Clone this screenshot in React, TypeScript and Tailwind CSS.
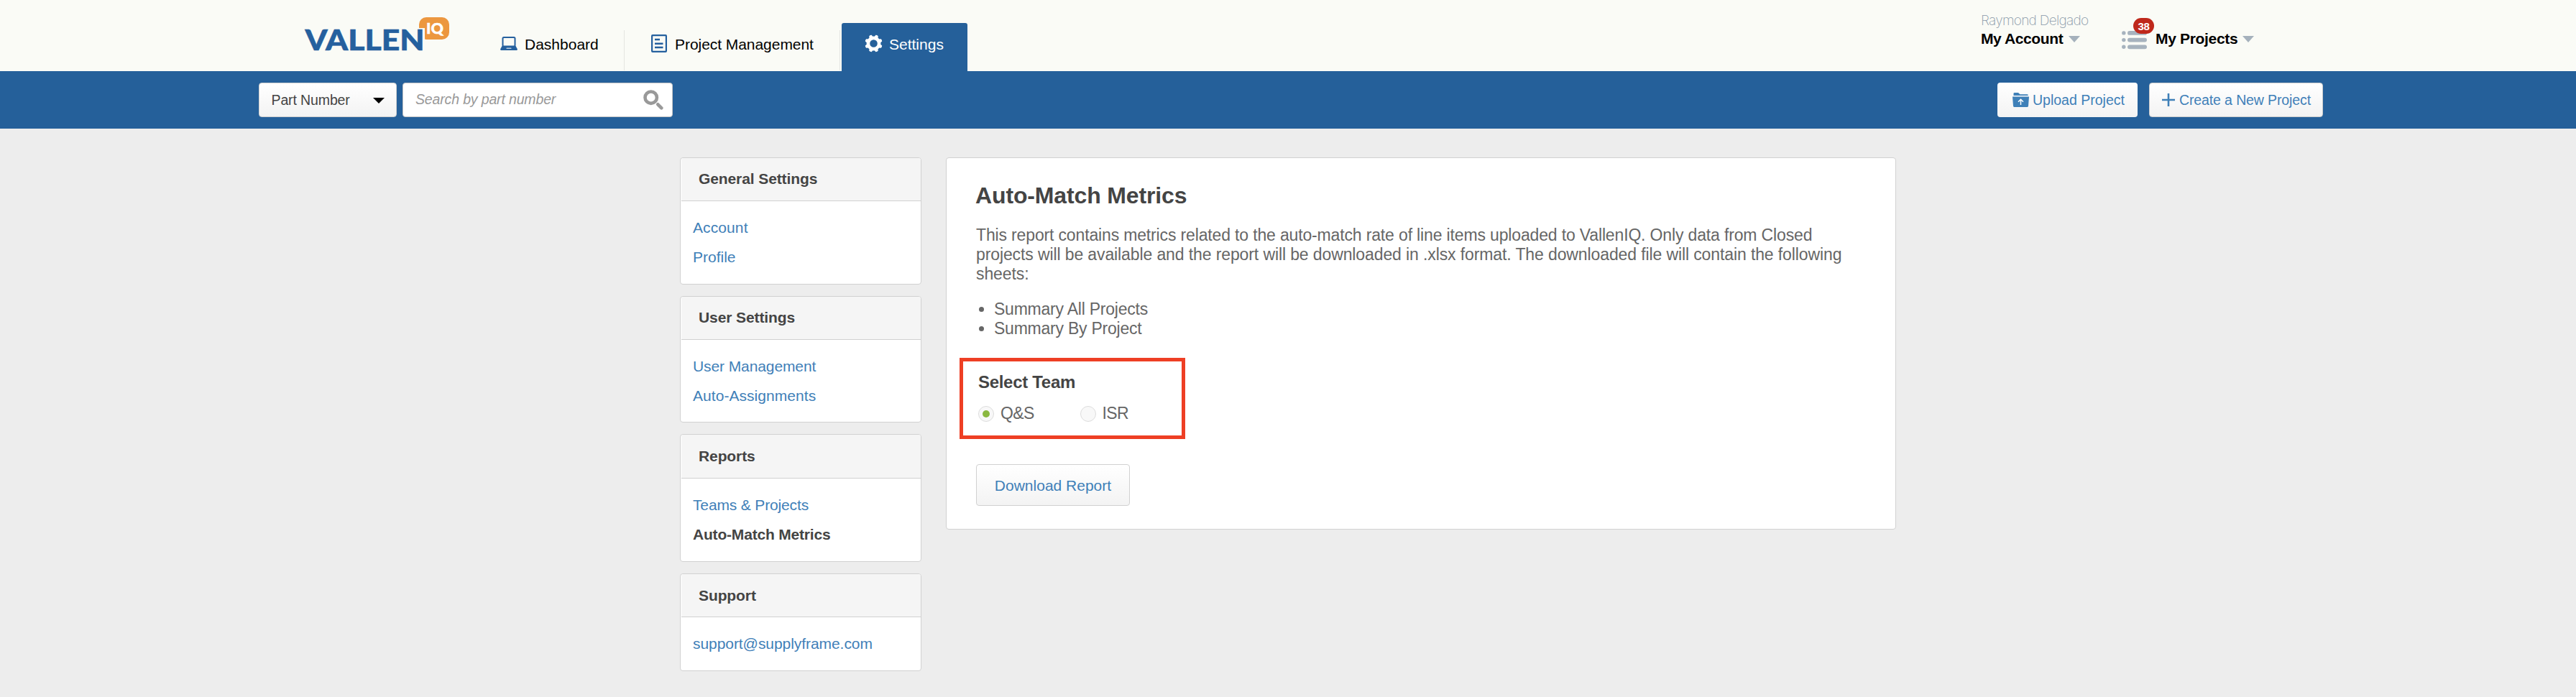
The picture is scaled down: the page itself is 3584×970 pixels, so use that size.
import type { ReactNode } from "react";

function Logo() {
  return (
    <svg width="202" height="60" viewBox="0 0 202 60" className="mt-[24px] shrink-0 overflow-visible">
      <rect x="159" y="0" width="42" height="31" rx="10" fill="#ec973f" />
      <rect x="150" y="15" width="17" height="33" fill="#fafbf6" />
      <text x="0.5" y="45.7" fontFamily="Lato" fontWeight="900" fontSize="39" fill="#25609e" stroke="#25609e" strokeWidth="0.6" textLength="166" lengthAdjust="spacingAndGlyphs">
        VALLEN
      </text>
      <text x="169" y="22.6" fontFamily="Lato" fontWeight="900" fontSize="21.5" fill="#ffffff" stroke="#ffffff" strokeWidth="0.5" textLength="24" lengthAdjust="spacingAndGlyphs">
        IQ
      </text>
    </svg>
  );
}

function LaptopIcon() {
  return (
    <svg width="24" height="19" viewBox="0 0 24 19" className="mt-px shrink-0">
      <rect x="3.5" y="1" width="17" height="12.5" rx="1.5" fill="none" stroke="#25609e" strokeWidth="2" />
      <path d="M2.5 13h19l2.3 4.2c.3 1-.1 1.8-1 1.8H1.2c-.9 0-1.3-.8-1-1.8z" fill="#25609e" />
      <rect x="8.5" y="15.5" width="7" height="1.6" rx=".6" fill="#b9cde0" />
    </svg>
  );
}

function DocumentIcon() {
  return (
    <svg width="22" height="25" viewBox="0 0 22 25" className="-mt-[2px] shrink-0">
      <rect x="1.1" y="1.1" width="19.8" height="22.8" rx=".8" fill="none" stroke="#25609e" strokeWidth="2.2" />
      <path d="M5 7h7M5 12.7h11.5M5 18h11.5" stroke="#25609e" strokeWidth="2.4" fill="none" />
    </svg>
  );
}

function GearIcon() {
  const teeth = [0, 45, 90, 135, 180, 225, 270, 315];
  return (
    <svg width="25" height="25" viewBox="0 0 25 25" className="-mt-[2px] shrink-0">
      <g transform="rotate(22.5 12.5 12.5)" fill="#ffffff">
        {teeth.map((a) => (
          <path key={a} d="M9.4 4.5L10.7 .6Q12.5 -.2 14.3 .6L15.6 4.5z" transform={`rotate(${a} 12.5 12.5)`} />
        ))}
      </g>
      <circle cx="12.5" cy="12.5" r="7.6" fill="none" stroke="#ffffff" strokeWidth="4.6" />
    </svg>
  );
}

function SearchIcon() {
  return (
    <svg width="28" height="28" viewBox="0 0 28 28" className="shrink-0">
      <circle cx="10.7" cy="10.7" r="8.2" fill="none" stroke="#999999" strokeWidth="4.6" />
      <path d="M20.3 20.3l5 5" stroke="#999999" strokeWidth="4.6" strokeLinecap="round" />
    </svg>
  );
}

function FolderIcon() {
  return (
    <svg width="23" height="20" viewBox="0 0 23 20" className="shrink-0">
      <path d="M1.5 4V1.2Q1.5 0 2.7 0H8l2.5 2.3H20.5q1.2 0 1.2 1.2V4z" fill="#3f80b8" />
      <path d="M0 5.6h23l-1 13q-.1 1.4-1.4 1.4H2.4q-1.3 0-1.4-1.4z" fill="#3f80b8" />
      <path d="M11.5 17V10M8 12.8l3.5-3.5 3.5 3.5" fill="none" stroke="#ffffff" strokeWidth="1.5" />
    </svg>
  );
}

function PlusIcon() {
  return (
    <svg width="18" height="18" viewBox="0 0 18 18" className="shrink-0">
      <path d="M9 0v18M0 9h18" stroke="#3f80b8" strokeWidth="2.6" />
    </svg>
  );
}

function Caret({ className }: { className: string }) {
  return (
    <svg width="16" height="9" viewBox="0 0 16 9" className={className}>
      <path d="M0 0h16L8 9z" fill="currentColor" />
    </svg>
  );
}

function ListIcon() {
  return (
    <svg width="35" height="26" viewBox="0 0 35 26" fill="#a7b3be" className="shrink-0">
      {[0, 9.7, 19.4].map((y) => (
        <g key={y}>
          <circle cx="2.8" cy={y + 2.9} r="2.7" />
          <rect x="8" y={y} width="27" height="5.8" rx="2.9" />
        </g>
      ))}
    </svg>
  );
}

function Header() {
  return (
    <header className="flex h-[99px] bg-[#fafbf6] pr-[448px] pl-[424px] text-[21px] leading-[23px] text-black">
      <Logo />
      <nav className="mt-8 ml-[70px] flex h-[67px]">
        <a className="flex w-[172px] pt-[18px]">
          <LaptopIcon />
          <span className="ml-[10px]">Dashboard</span>
        </a>
        <div className="mt-[10px] h-14 w-px bg-[#e4e5e1]" />
        <a className="flex w-[299px] pt-[18px] pl-[37px]">
          <DocumentIcon />
          <span className="ml-[11px] tracking-[-0.05px] whitespace-nowrap">Project Management</span>
        </a>
        <div className="mt-[10px] h-14 w-px bg-[#e4e5e1]" />
        <a className="ml-[2px] flex w-[175px] rounded-t-[3px] bg-[#25609a] pt-[18px] pl-[32px] text-white">
          <GearIcon />
          <span className="ml-[9px]">Settings</span>
        </a>
      </nav>
      <div className="ml-auto flex">
        <div className="w-[196px] whitespace-nowrap">
          <div className="mt-[17px] font-['Inter'] text-[19px] leading-[23px] font-extralight tracking-[-0.7px] text-[#8a9aa9]">Raymond Delgado</div>
          <div className="mt-px flex leading-[25px]">
            <span className="w-[122px] font-bold tracking-[-0.4px]">My Account</span>
            <Caret className="mt-[9px] text-[#a5b1bc]" />
          </div>
        </div>
        <div className="relative flex">
          <div className="mt-[43px]">
            <ListIcon />
          </div>
          <div className="absolute top-[25px] left-[16px] flex h-[22px] w-[29px] items-center justify-center rounded-full bg-[#bf281b] text-[15px] font-bold tracking-[-0.3px] text-white">
            38
          </div>
          <span className="mt-[41px] ml-[12px] w-[121px] leading-[25px] font-bold tracking-[-0.32px] whitespace-nowrap">My Projects</span>
          <Caret className="mt-[50px] text-[#a5b1bc]" />
        </div>
      </div>
    </header>
  );
}

function Toolbar() {
  return (
    <div className="flex h-20 items-center bg-[#25609a] pr-[352px] pl-[360px] text-[19.5px] leading-[23px] whitespace-nowrap">
      <div className="flex h-12 w-48 items-center rounded-[4px] border border-[#cfcfcf] bg-linear-to-b from-white to-[#f3f3f3] pl-[16.5px] text-[#444444]">
        <span className="w-[141px] tracking-[-0.12px]">Part Number</span>
        <svg width="16" height="8" viewBox="0 0 16 8" className="mt-[2px]">
          <path d="M0 0h16L8 8z" fill="#000000" />
        </svg>
      </div>
      <div className="ml-2 flex h-12 w-[376px] items-center justify-between rounded-[4px] border border-[#c4c4c4] bg-white pr-[12px] pl-[17px]">
        <span className="-mt-[2px] tracking-[-0.15px] text-[#999999] italic">Search by part number</span>
        <SearchIcon />
      </div>
      <div className="ml-auto flex h-12 w-[195px] items-center rounded-[4px] bg-linear-to-b from-white to-[#f3f3f3] pl-[21px] text-[#3f80b8]">
        <FolderIcon />
        <span className="ml-[5px]">Upload Project</span>
      </div>
      <div className="ml-4 flex h-12 w-[242px] items-center rounded-[4px] border border-[#cccccc] bg-linear-to-b from-white to-[#f3f3f3] pl-[17px] text-[#3f80b8]">
        <PlusIcon />
        <span className="ml-[6px] tracking-[-0.12px]">Create a New Project</span>
      </div>
    </div>
  );
}

function Card({ title, height, head, children }: { title: string; height: string; head: string; children: ReactNode }) {
  return (
    <section className={`rounded-[4px] border border-[#d1d1d1] bg-white ${height}`}>
      <h2 className={`ml-px rounded-t-[3px] border-b border-[#d1d1d1] bg-[#f5f5f5] pl-[24px] font-bold tracking-[-0.1px] text-[#444444] ${head}`}>{title}</h2>
      <div className="flex flex-col gap-[18px] pt-[25px] pl-[17px] text-[#3f80b8]">{children}</div>
    </section>
  );
}

function Sidebar() {
  return (
    <aside className="flex w-[336px] flex-col gap-4 text-[21px] leading-[23px]">
      <Card title="General Settings" height="h-[177px]" head="h-[60px] pt-[17px]">
        <a className="tracking-[0.1px]">Account</a>
        <a>Profile</a>
      </Card>
      <Card title="User Settings" height="h-[176px]" head="h-[60px] pt-[17px]">
        <a className="tracking-[-0.1px]">User Management</a>
        <a className="tracking-[0.05px]">Auto-Assignments</a>
      </Card>
      <Card title="Reports" height="h-[178px]" head="h-[61px] pt-[18px]">
        <a className="tracking-[-0.15px]">Teams &amp; Projects</a>
        <a className="font-bold tracking-[-0.19px] text-[#444444]">Auto-Match Metrics</a>
      </Card>
      <Card title="Support" height="h-[136px]" head="h-[60px] pt-[18px]">
        <a className="tracking-[-0.06px]">support@supplyframe.com</a>
      </Card>
    </aside>
  );
}

function Radio({ label, checked }: { label: string; checked?: boolean }) {
  return (
    <label className="flex w-[142px] items-center">
      <span className="flex size-[22px] items-center justify-center rounded-full border border-[#dddddd] bg-[#f8f8f8]">
        {checked && <span className="size-[10px] rounded-full bg-[#8ab840]" />}
      </span>
      <span className="ml-[9px] tracking-[-0.6px]">{label}</span>
    </label>
  );
}

function Report() {
  return (
    <main className="h-[518px] w-[1322px] rounded-[4px] border border-[#d1d1d1] bg-white pt-[34px] pl-[41px] text-[23px] leading-[27px] whitespace-nowrap text-[#666666]">
      <h1 className="-ml-px text-[32px] leading-[36px] font-bold tracking-[-0.14px] text-[#444444]">Auto-Match Metrics</h1>
      <div className="mt-[24px]">
        <div className="tracking-[-0.15px]">This report contains metrics related to the auto-match rate of line items uploaded to VallenIQ. Only data from Closed</div>
        <div className="tracking-[-0.11px]">projects will be available and the report will be downloaded in .xlsx format. The downloaded file will contain the following</div>
        <div className="tracking-[-0.1px]">sheets:</div>
      </div>
      <ul className="mt-[22px]">
        {["Summary All Projects", "Summary By Project"].map((t) => (
          <li key={t} className="flex items-center">
            <span className="ml-[4px] size-[7px] rounded-full bg-[#666666]" />
            <span className="ml-[14px] tracking-[-0.23px]">{t}</span>
          </li>
        ))}
      </ul>
      <div className="mt-[27px] -ml-[23px] h-[113px] w-[314px] border-[5px] border-[#ee3f24] pl-[21px]">
        <div className="mt-[15px] text-[24px] leading-[28px] font-bold tracking-[-0.3px] text-[#444444]">Select Team</div>
        <div className="mt-[16px] flex">
          <Radio label="Q&S" checked />
          <Radio label="ISR" />
        </div>
      </div>
      <button className="mt-[35px] flex h-[58px] w-[214px] items-center justify-center rounded-[4px] border border-[#d1d1d1] bg-linear-to-b from-white to-[#f3f3f3] text-[21px] text-[#3f80b8]">
        Download Report
      </button>
    </main>
  );
}

export default function App() {
  return (
    <div className="h-[970px] w-[3584px] overflow-hidden bg-[#ededed] font-['Liberation_Sans',Arial,sans-serif]">
      <Header />
      <Toolbar />
      <div className="mt-10 flex items-start gap-[34px] pl-[946px]">
        <Sidebar />
        <Report />
      </div>
    </div>
  );
}
